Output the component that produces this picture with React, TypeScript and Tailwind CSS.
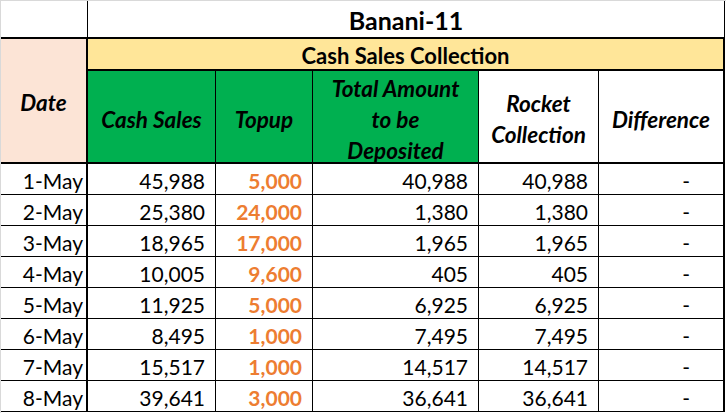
import React from "react";

const rows = [
  ["1-May", "45,988", "5,000", "40,988", "40,988"],
  ["2-May", "25,380", "24,000", "1,380", "1,380"],
  ["3-May", "18,965", "17,000", "1,965", "1,965"],
  ["4-May", "10,005", "9,600", "405", "405"],
  ["5-May", "11,925", "5,000", "6,925", "6,925"],
  ["6-May", "8,495", "1,000", "7,495", "7,495"],
  ["7-May", "15,517", "1,000", "14,517", "14,517"],
  ["8-May", "39,641", "3,000", "36,641", "36,641"],
];

export default function App() {
  return (
    <div className="w-[726px] h-[413px] bg-white border-t border-l border-[#d9d9d9] font-['Lato',sans-serif] text-black overflow-hidden">
      {/* Title row */}
      <div className="flex h-[38px] w-[724px] border-b-2 border-black">
        <div className="w-[87px] border-r border-black" />
        <div className="w-[637px] border-r border-black flex items-center justify-center pt-[2px] text-[25px] font-bold leading-[28px]">
          Banani-11
        </div>
      </div>
      {/* Header block */}
      <div className="flex w-[724px]">
        <div className="w-[87px] h-[125px] border-r-2 border-b-2 border-black bg-[#fce4d6] flex items-center justify-center pt-[5px] text-[22.5px] font-bold italic leading-[26px]">
          Date
        </div>
        <div className="w-[637px] flex flex-col">
          <div className="h-[32px] border-b-2 border-r-2 border-black bg-[#ffe699] flex items-center justify-center pt-[4px] text-[22px] font-bold leading-[26px]">
            Cash Sales Collection
          </div>
          <div className="h-[93px] border-b-2 border-black flex text-[22.5px] font-bold italic leading-[31px] text-center">
            <div className="w-[128px] border-r border-black bg-[#00b050] flex items-center justify-center pt-[5px]">
              Cash Sales
            </div>
            <div className="w-[97px] border-r border-black bg-[#00b050] flex items-center justify-center pt-[5px]">
              Topup
            </div>
            <div className="w-[166px] border-r border-black bg-[#00b050] flex items-center justify-center pt-[5px]">
              <div>
                Total Amount
                <br />
                to be
                <br />
                Deposited
              </div>
            </div>
            <div className="w-[120px] border-r border-black bg-white flex items-center justify-center pt-[5px]">
              <div>
                Rocket
                <br />
                Collection
              </div>
            </div>
            <div className="w-[126px] border-r-2 border-black bg-white flex items-center justify-center pt-[5px]">
              Difference
            </div>
          </div>
        </div>
      </div>
      {/* Data rows */}
      {rows.map((r) => (
        <div key={r[0]} className="flex w-[724px] h-[31px] border-b border-black text-[21px] leading-[24px]">
          <div className="w-[87px] border-r-2 border-black flex items-end justify-end pr-[3px] pb-[1px]">
            {r[0]}
          </div>
          <div className="w-[128px] border-r border-black flex items-end justify-end pr-[10px] pb-[1px]">
            {r[1]}
          </div>
          <div className="w-[97px] border-r border-black flex items-end justify-end pr-[10px] pb-[1px] font-bold text-[#ed7d31]">
            {r[2]}
          </div>
          <div className="w-[166px] border-r border-black flex items-end justify-end pr-[10px] pb-[1px]">
            {r[3]}
          </div>
          <div className="w-[120px] border-r border-black flex items-end justify-end pr-[10px] pb-[1px]">
            {r[4]}
          </div>
          <div className="w-[126px] border-r-2 border-black flex items-end justify-end pr-[33px] pb-[1px]">
            -
          </div>
        </div>
      ))}
    </div>
  );
}
